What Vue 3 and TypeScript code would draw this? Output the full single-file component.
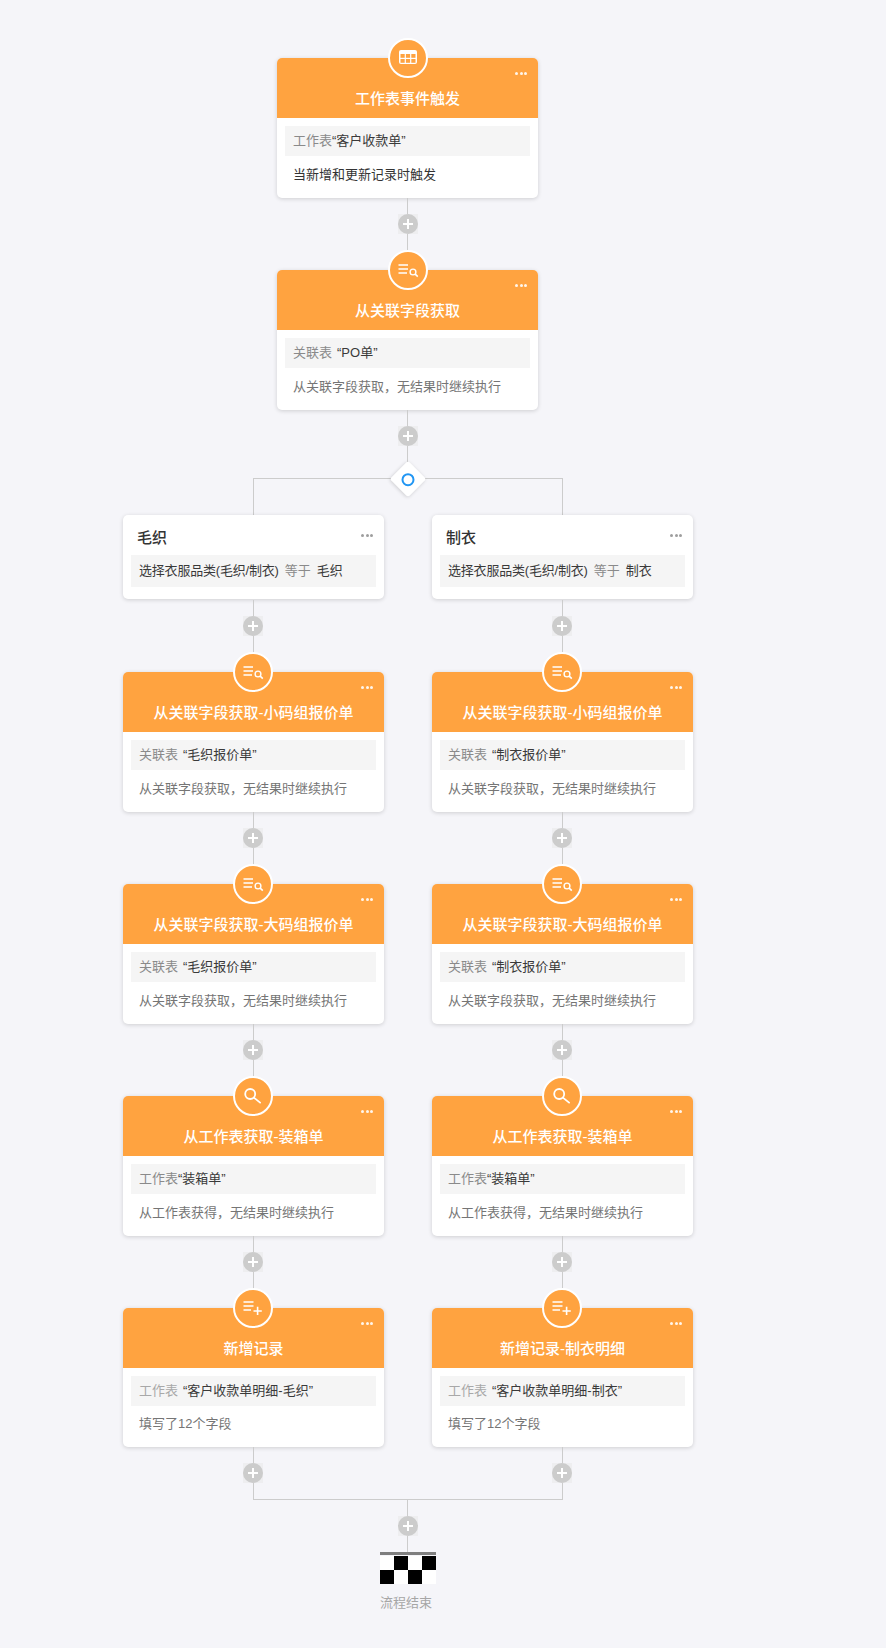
<script setup lang="ts">
type Icon = 'table' | 'listSearch' | 'search' | 'listPlus'

interface ActionNode {
  kind: 'action'
  icon: Icon
  title: string
  label: string
  spaced: boolean
  value: string
  desc: string
  dark?: boolean
  faint?: boolean
}

interface ConditionNode {
  kind: 'condition'
  title: string
  field: string
  op: string
  target: string
}

type FlowNode = ActionNode | ConditionNode

const relDesc = '从关联字段获取，无结果时继续执行'
const sheetDesc = '从工作表获得，无结果时继续执行'

const top: FlowNode[] = [
  { kind: 'action', icon: 'table', title: '工作表事件触发', label: '工作表', spaced: false, value: '“客户收款单”', desc: '当新增和更新记录时触发', dark: true },
  { kind: 'action', icon: 'listSearch', title: '从关联字段获取', label: '关联表', spaced: true, value: '“PO单”', desc: relDesc },
]

function lane(name: string, addTitle: string): FlowNode[] {
  const quote = `“${name}报价单”`
  return [
    { kind: 'condition', title: name, field: '选择衣服品类(毛织/制衣)', op: '等于', target: name },
    { kind: 'action', icon: 'listSearch', title: '从关联字段获取-小码组报价单', label: '关联表', spaced: true, value: quote, desc: relDesc },
    { kind: 'action', icon: 'listSearch', title: '从关联字段获取-大码组报价单', label: '关联表', spaced: true, value: quote, desc: relDesc },
    { kind: 'action', icon: 'search', title: '从工作表获取-装箱单', label: '工作表', spaced: false, value: '“装箱单”', desc: sheetDesc },
    { kind: 'action', icon: 'listPlus', title: addTitle, label: '工作表', spaced: true, value: `“客户收款单明细-${name}”`, desc: '填写了12个字段', faint: true },
  ]
}

const lanes: FlowNode[][] = [lane('毛织', '新增记录'), lane('制衣', '新增记录-制衣明细')]
const rows: { single: boolean; lanes: FlowNode[][] }[] = [
  { single: true, lanes: [top] },
  { single: false, lanes },
]
const checks = [0, 1, 0, 1, 1, 0, 1, 0]
</script>

<template>
  <div class="flow">
    <div v-for="(row, r) in rows" :key="r" class="lanes" :class="{ single: row.single, split: !row.single }">
      <div v-if="!row.single" class="diamond"><span class="ring"></span></div>
      <div v-for="(nodes, l) in row.lanes" :key="l" class="lane">
        <div v-if="!row.single" class="stem"></div>
        <template v-for="(node, n) in nodes" :key="n">
          <section v-if="node.kind === 'action'" class="card" :class="{ trim: !row.single && n === nodes.length - 1 }">
            <div class="badge">
              <svg width="36" height="36" viewBox="0 0 36 36" fill="none" stroke="#fff">
                <g v-if="node.icon === 'table'">
                  <rect x="9" y="10" width="18" height="14" rx="2" fill="#fff" stroke="none" />
                  <g fill="#ffa340" stroke="none">
                    <rect x="10.5" y="14" width="4.2" height="3.8" />
                    <rect x="15.9" y="14" width="4.2" height="3.8" />
                    <rect x="21.3" y="14" width="4.2" height="3.8" />
                    <rect x="10.5" y="19" width="4.2" height="3.8" />
                    <rect x="15.9" y="19" width="4.2" height="3.8" />
                    <rect x="21.3" y="19" width="4.2" height="3.8" />
                  </g>
                </g>
                <g v-else-if="node.icon === 'listSearch'" stroke-width="1.6">
                  <path d="M8.5 13H18M8.5 17H18M8.5 21H17" />
                  <circle cx="23" cy="20" r="2.9" stroke-width="1.4" />
                  <path d="M25.2 22.2L27.8 24.6" />
                </g>
                <g v-else-if="node.icon === 'search'" stroke-width="1.8">
                  <circle cx="15.2" cy="16" r="5" />
                  <path d="M18.9 19.6L25.1 24.6" stroke-linecap="round" />
                </g>
                <g v-else stroke-width="1.6">
                  <path d="M8.5 12H18.5M8.5 16H18.5M8.5 20H16M18.5 21H26.8M22.6 16.8V25" />
                </g>
              </svg>
            </div>
            <span class="dots light"><i></i><i></i><i></i></span>
            <header class="head">{{ node.title }}</header>
            <div class="body">
              <div class="info info-action">
                <span class="muted" :class="{ spaced: node.spaced, faint: node.faint }">{{ node.label }}</span><span>{{ node.value }}</span>
              </div>
              <p class="desc" :class="{ dark: node.dark }">{{ node.desc }}</p>
            </div>
          </section>

          <section v-else class="card cond">
            <span class="dots"><i></i><i></i><i></i></span>
            <h3 class="cond-title">{{ node.title }}</h3>
            <div class="info info-cond">
              <span class="field">{{ node.field }}</span><span class="muted op">{{ node.op }}</span><span>{{ node.target }}</span>
            </div>
          </section>

          <div class="link" :class="{ short: !row.single && n === nodes.length - 1, entry: row.single && n === nodes.length - 1 }">
            <button class="plus" type="button"><span></span></button>
          </div>
        </template>
      </div>
    </div>

    <div class="merge"></div>
    <div class="lanes single">
      <div class="lane">
        <div class="link tail">
          <button class="plus" type="button"><span></span></button>
        </div>
        <div class="end">
          <div class="flag">
            <div class="flag-bar"></div>
            <div class="flag-grid">
              <i v-for="(c, i) in checks" :key="i" :class="c ? 'black' : 'white'"></i>
            </div>
          </div>
          <div class="end-text">流程结束</div>
        </div>
      </div>
    </div>
  </div>
</template>

<style>
html,
body {
  margin: 0;
  background: #f5f5f9;
}
</style>

<style scoped>
.flow {
  box-sizing: border-box;
  width: 886px;
  min-height: 1648px;
  padding: 58px 0 0 123px;
  background: #f5f5f9;
  font-family: "Liberation Sans", "Noto Sans CJK SC", sans-serif;
  font-size: 13px;
  color: #3a3a3a;
}

.lanes {
  position: relative;
  display: flex;
  gap: 48px;
  width: 570px;
}

.lanes.single {
  padding-left: 154px;
  box-sizing: border-box;
}

.lanes.split::before {
  content: "";
  position: absolute;
  top: 0;
  left: 130px;
  width: 310px;
  height: 1px;
  background: #ccc;
}

.lane {
  display: flex;
  flex-direction: column;
  width: 261px;
}

.stem {
  width: 1px;
  height: 37px;
  margin-left: 130px;
  background: #ccc;
}

.diamond {
  position: absolute;
  z-index: 2;
  top: -12px;
  left: 272px;
  display: flex;
  align-items: center;
  justify-content: center;
  width: 26px;
  height: 26px;
  border-radius: 3px;
  background: #fff;
  box-shadow: 0 1px 4px rgba(0, 0, 0, 0.16);
  transform: rotate(45deg);
}

.ring {
  box-sizing: border-box;
  width: 13px;
  height: 13px;
  border: 2px solid #2196f3;
  border-radius: 50%;
}

.card {
  position: relative;
  height: 140px;
  border-radius: 5px;
  background: #fff;
  box-shadow: 0 1px 4px rgba(0, 0, 0, 0.16);
}

.card.trim {
  height: 139px;
}

.cond {
  height: 84px;
  margin-bottom: 1px;
}

.badge {
  position: absolute;
  z-index: 1;
  top: -20px;
  left: 110px;
  display: flex;
  align-items: center;
  justify-content: center;
  box-sizing: border-box;
  width: 40px;
  height: 40px;
  border: 2px solid #fff;
  border-radius: 50%;
  background: #ffa340;
}

.single .badge {
  left: 111px;
}

.badge svg {
  display: block;
  flex: none;
}

.dots {
  position: absolute;
  top: 19px;
  right: 11px;
  display: flex;
  gap: 1.5px;
}

.dots.light {
  top: 14px;
}

.dots i {
  width: 3px;
  height: 3px;
  border-radius: 50%;
  background: #9e9e9e;
}

.dots.light i {
  background: rgba(255, 255, 255, 0.9);
}

.head {
  box-sizing: border-box;
  height: 60px;
  padding-top: 31px;
  border-radius: 5px 5px 0 0;
  background: #ffa340;
  color: #fff;
  font-size: 15px;
  font-weight: 500;
  line-height: 20px;
  text-align: center;
}

.body {
  padding: 8px 8px 0;
}

.info {
  box-sizing: border-box;
  padding: 0 8px;
  background: #f5f5f5;
  white-space: nowrap;
}

.info-action {
  height: 30px;
  line-height: 30px;
}

.muted {
  color: #8a8a8a;
}

.muted.faint {
  color: #a8a8a8;
}

.spaced {
  margin-right: 5px;
}

.desc {
  margin: 9px 0 0;
  padding: 0 8px;
  color: #757575;
  line-height: 20px;
}

.trim .desc {
  margin-top: 8px;
}

.desc.dark {
  color: #333;
}

.cond-title {
  margin: 0;
  padding: 13px 14px 0;
  color: #333;
  font-size: 15px;
  font-weight: 500;
  line-height: 20px;
}

.info-cond {
  height: 32px;
  margin: 7px 8px 0;
  line-height: 32px;
}

.field {
  letter-spacing: -0.2px;
}

.op {
  margin: 0 6px;
}

.link {
  position: relative;
  display: flex;
  box-sizing: border-box;
  height: 72px;
  padding: 16px 0 0 120px;
}

.single .link {
  padding-left: 121px;
}

.link.entry {
  height: 68px;
}

.link.short {
  height: 52px;
}

.link.tail {
  height: 52px;
}

.link::before {
  content: "";
  position: absolute;
  top: 0;
  bottom: 0;
  left: 130px;
  width: 1px;
  background: #ccc;
}

.plus {
  position: relative;
  width: 20px;
  height: 20px;
  padding: 0;
  border: 0;
  background: #eeeef0;
}

.plus span {
  position: absolute;
  inset: 0;
  border-radius: 50%;
  background:
    linear-gradient(#fff, #fff) center / 10px 2px no-repeat,
    linear-gradient(#fff, #fff) center / 2px 10px no-repeat,
    #ccc;
}

.merge {
  width: 310px;
  height: 1px;
  margin-left: 130px;
  background: #ccc;
}

.end {
  display: flex;
  flex-direction: column;
  align-items: flex-start;
  margin-left: 103px;
}

.flag {
  width: 56px;
}

.flag-bar {
  height: 3px;
  margin-bottom: 1px;
  background: #7f7f7f;
}

.flag-grid {
  display: grid;
  grid-template-columns: repeat(4, 14px);
  grid-auto-rows: 14px;
}

.black {
  background: #000;
}

.white {
  background: #fff;
}

.end-text {
  margin-top: 10px;
  color: #a6a6a6;
  line-height: 18px;
}
</style>
